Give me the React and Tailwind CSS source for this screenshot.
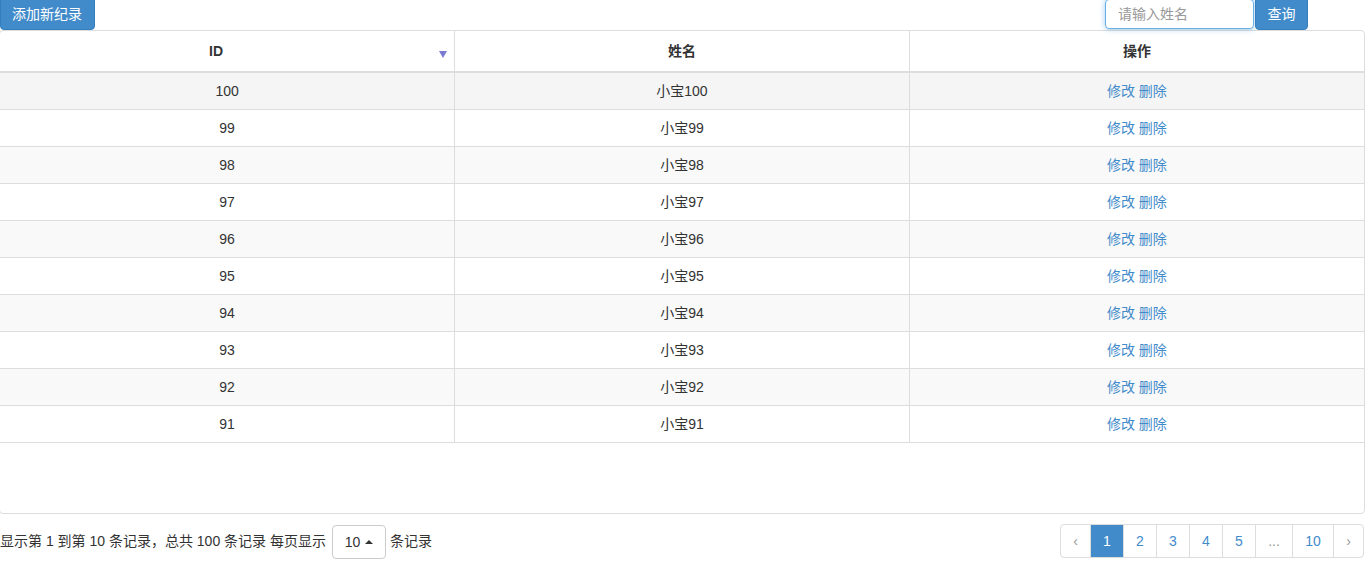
import React from 'react'

const rows = [100, 99, 98, 97, 96, 95, 94, 93, 92, 91]
const pages = ['‹', '1', '2', '3', '4', '5', '...', '10', '›']
const pageWidths = ['w-[31px]', 'w-[34px]', 'w-[34px]', 'w-[34px]', 'w-[34px]', 'w-[34px]', 'w-[38px]', 'w-[42px]', 'w-[31px]']

export default function App() {
    return (
        <div className="w-[1365px] h-[580px] bg-white text-[#333] text-[14px] overflow-hidden font-['Liberation_Sans','Noto_Sans_CJK_SC',sans-serif]">
            {/* Toolbar */}
            <div className="flex items-start justify-between h-[30px]">
                <button className="-mt-[4px] h-[34px] pl-[11px] pr-[12px] bg-[#428bca] border border-[#357ebd] text-white rounded-[4px] leading-[30px] pt-[2px]">
                    添加新纪录
                </button>
                <div className="flex items-start mr-[57px]">
                    <input
                        readOnly
                        placeholder="请输入姓名"
                        className="w-[149px] h-[30px] px-[12px] border border-[#66afe9] rounded-[4px] shadow-[0_1px_1px_rgba(0,0,0,0.075),0_0_6px_rgba(102,175,233,0.6)] outline-none placeholder:text-[#999] -mt-[1px]"
                    />
                    <button className="ml-[1px] -mt-[4px] h-[34px] w-[53px] bg-[#428bca] border border-[#357ebd] text-white rounded-[4px] pt-[3px]">
                        查询
                    </button>
                </div>
            </div>

            {/* Table */}
            <div className="-ml-px w-[1366px] h-[484px] border border-[#ddd] rounded-[4px]">
                <table className="w-full border-collapse table-fixed">
                    <thead>
                        <tr className="h-[41px] border-b-2 border-[#ddd]">
                            <th className="relative font-bold text-center pr-[22px]">
                                ID
                                <span className="absolute right-[7px] top-[20px] w-0 h-0 border-l-[4px] border-r-[4px] border-t-[7px] border-l-transparent border-r-transparent border-t-[#7b7bd1]" />
                            </th>
                            <th className="font-bold text-center border-l border-[#ddd]">姓名</th>
                            <th className="font-bold text-center border-l border-[#ddd]">操作</th>
                        </tr>
                    </thead>
                    <tbody>
                        {rows.map((id, i) => (
                            <tr
                                key={id}
                                className={`h-[37px] border-t border-[#ddd] ${i === 0 ? 'bg-[#f5f5f5]' : i % 2 === 0 ? 'bg-[#f9f9f9]' : 'bg-white'}`}
                            >
                                <td className="text-center pt-[2px]">{id}</td>
                                <td className="text-center pt-[2px] border-l border-[#ddd]">小宝{id}</td>
                                <td className="text-center pt-[2px] border-l border-[#ddd] text-[#428bca]">
                                    <span>修改</span> <span>删除</span>
                                </td>
                            </tr>
                        ))}
                        <tr className="border-t border-[#ddd]">
                            <td colSpan={3} />
                        </tr>
                    </tbody>
                </table>
            </div>

            {/* Footer */}
            <div className="flex items-center justify-between mt-[10px]">
                <div className="flex items-center">
                    <span>显示第 1 到第 10 条记录，总共 100 条记录 每页显示</span>
                    <span className="ml-[6px] mt-[1px] flex items-center justify-center gap-[5px] w-[54px] h-[34px] border border-[#ccc] rounded-[4px]">
                        10
                        <span className="w-0 h-0 border-l-[4px] border-r-[4px] border-b-[4px] border-l-transparent border-r-transparent border-b-[#333]" />
                    </span>
                    <span className="ml-[4px]">条记录</span>
                </div>
                <div className="flex mr-[1px] -mt-[1px]">
                    {pages.map((p, i) => (
                        <span
                            key={i}
                            className={`${pageWidths[i]} h-[34px] flex items-center justify-center border border-[#ddd] -ml-px first:ml-0 first:rounded-l-[4px] last:rounded-r-[4px] ${
                                p === '1'
                                    ? 'bg-[#428bca] border-[#428bca] text-white'
                                    : p === '...' || p === '‹' || p === '›'
                                    ? 'text-[#999]'
                                    : 'text-[#428bca]'
                            }`}
                        >
                            {p}
                        </span>
                    ))}
                </div>
            </div>
        </div>
    )
}
